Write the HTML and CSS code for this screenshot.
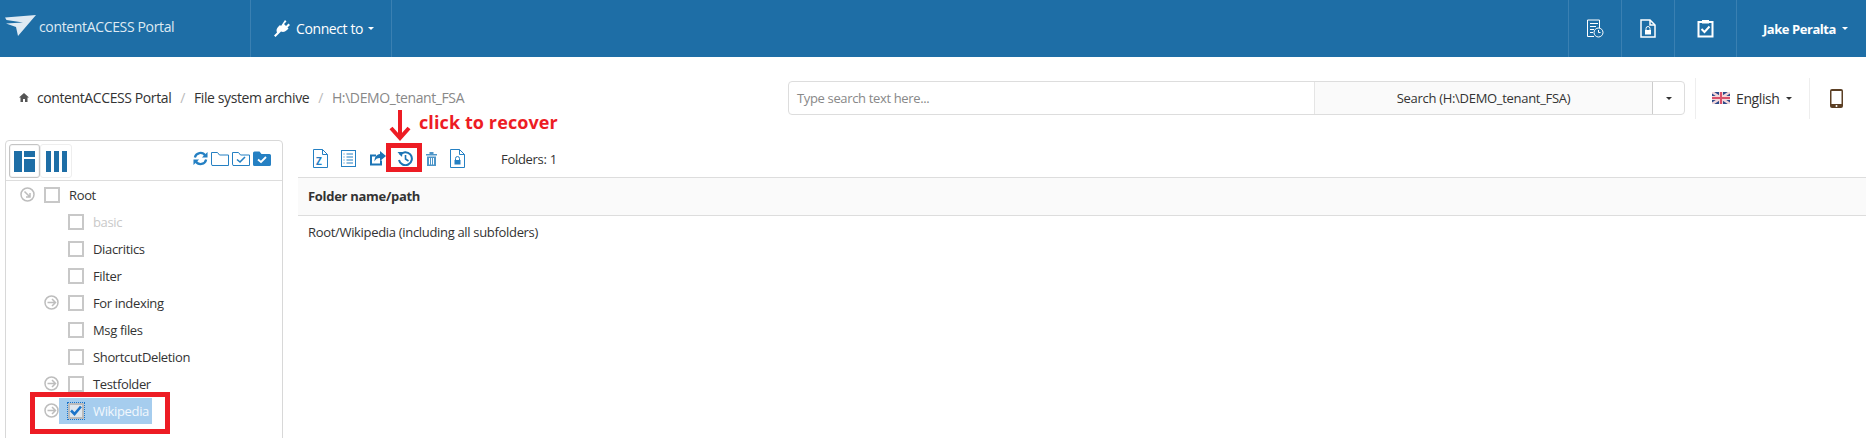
FILE: index.html
```html
<!DOCTYPE html>
<html lang="en">
<head>
<meta charset="utf-8">
<title>contentACCESS Portal</title>
<link rel="stylesheet" href="styles.css">
</head>
<body>
<header class="topbar">
  <div class="brand">
    <svg class="brand-logo" width="32" height="22" viewBox="0 0 32 22"><path d="M0 2.500L31 0 13 21 11 12 1 8.500 18 7.500 1.500 5Z" fill="#dfeaf3"/></svg>
    <span class="brand-text">contentACCESS Portal</span>
  </div>
  <div class="nav-item connect">
    <svg width="18" height="19" viewBox="0 0 18 19"><path d="M12 1l1.500 1.500L11 5l2 2 2.500-2.500L17 6l-2.500 2.500 1 1-1.500 1.500c-2 2-4 2.500-6 1.500L5 15.500l-2.500 2.500L1 16.500l3-3C3 11.500 3.500 9.500 5.500 7.500L7 6l1 1z" fill="#fff"/></svg>
    <span>Connect to</span><i class="caret"></i>
  </div>
  <div class="spacer"></div>
  <div class="nav-icon">
    <svg width="18" height="19" viewBox="0 0 18 19" fill="none" stroke="#fff"><path d="M8 17.500H1.500V1h12v8"/><path d="M4 4.500h8M4 7.500h6M4 10.500h4M4 13.500h3" stroke-dasharray="none"/><circle cx="12.500" cy="13.500" r="4.500"/><path d="M12.500 11v2.500h2"/></svg>
  </div>
  <div class="nav-icon">
    <svg width="16" height="19" viewBox="0 0 16 19" fill="none" stroke="#fff" stroke-width="1.500"><path d="M1 1h9l5 5v12H1z"/><path d="M10 1v5h5"/><rect x="5" y="11" width="6" height="4.500" fill="#fff" stroke="none"/><path d="M6 11V9.500a2 2 0 0 1 4 0V11" stroke-width="1"/></svg>
  </div>
  <div class="nav-icon">
    <svg width="17" height="19" viewBox="0 0 17 19" fill="none" stroke="#fff" stroke-width="2"><path d="M5 3H1.500v14.500h14V3H12"/><rect x="5" y="1" width="7" height="3.500" fill="#fff" stroke="none"/><path d="M4.500 10l3 3 5-5.500"/></svg>
  </div>
  <div class="user"><span>Jake Peralta</span><i class="caret"></i></div>
</header>

<section class="subbar">
  <nav class="crumbs">
    <svg width="10" height="9" viewBox="0 0 10 9"><path d="M5 0l5 4.500H8.500V9H6V6H4v3H1.500V4.500H0z" fill="#555"/></svg>
    <a class="crumb-first">contentACCESS Portal</a><b>/</b><a>File system archive</a><b>/</b><em>H:\DEMO_tenant_FSA</em>
  </nav>
  <div class="search">
    <div class="search-input">Type search text here...</div>
    <div class="search-btn">Search (H:\DEMO_tenant_FSA)</div>
    <div class="search-drop"><i class="caret dark"></i></div>
  </div>
  <div class="lang">
    <svg width="18" height="12" viewBox="0 0 18 12"><rect width="18" height="12" fill="#2d4a8a"/><path d="M0 0l18 12M18 0L0 12" stroke="#f3d6da" stroke-width="2.500"/><path d="M9 0v12M0 6h18" stroke="#f3d6da" stroke-width="4"/><path d="M9 0v12M0 6h18" stroke="#d9506a" stroke-width="2"/></svg>
    <span>English</span><i class="caret dark"></i>
  </div>
  <div class="device">
    <svg width="13" height="19" viewBox="0 0 13 19"><rect x="0" y="0" width="13" height="19" rx="2" fill="#5b3f24"/><rect x="1.500" y="2" width="10" height="13" fill="#fff"/><circle cx="6.500" cy="17" r="1" fill="#fff"/></svg>
  </div>
</section>

<main class="workspace">
  <aside class="tree-panel">
    <div class="tree-tools">
      <div class="view-btn active">
        <svg width="21" height="21" viewBox="0 0 21 21" fill="#1e6ea6"><rect width="8" height="21"/><rect x="10" width="11" height="6"/><rect x="10" y="8" width="11" height="13"/></svg>
      </div>
      <div class="view-btn">
        <svg width="21" height="21" viewBox="0 0 21 21" fill="#1e6ea6"><rect width="5" height="21"/><rect x="8" width="5" height="21"/><rect x="16" width="5" height="21"/></svg>
      </div>
      <div class="tree-actions">
        <svg width="15" height="15" viewBox="0 0 16 16" fill="none" stroke="#2580c3" stroke-width="2.400"><path d="M2 7a6 6 0 0 1 11-2M14 9a6 6 0 0 1-11 2"/><path d="M15.500 1v6h-6z M.5 15V9h6z" fill="#2580c3" stroke="none"/></svg>
        <svg width="18" height="15" viewBox="0 0 18 15" fill="none" stroke="#2580c3"><path d="M.5 13V1.500h6l2 2.500h9v10.500H1z"/></svg>
        <svg width="18" height="15" viewBox="0 0 18 15" fill="none" stroke="#2580c3"><path d="M.5 13V1.500h6l2 2.500h9v10.500H1z"/><path d="M5 8.500l3 2.500 5-5" stroke-width="1.600"/></svg>
        <svg width="18" height="15" viewBox="0 0 18 15"><path d="M0 2a1.500 1.500 0 0 1 1.500-1.500h5l2 2.500h8A1.500 1.500 0 0 1 18 4.500v9a1.500 1.500 0 0 1-1.500 1.500h-15A1.500 1.500 0 0 1 0 13.500z" fill="#2580c3"/><path d="M5 8.500l3 2.500 5-5" fill="none" stroke="#fff" stroke-width="1.800"/></svg>
      </div>
    </div>
    <ul class="tree">
      <li class="node root"><span class="exp"><svg width="15" height="15" viewBox="0 0 15 15" fill="none" stroke="#bdbdbd" stroke-width="1.500"><circle cx="7.500" cy="7.500" r="6.500"/><path d="M4.500 4.500l5.500 5.500M10 6v4H6"/></svg></span><span class="box"></span><span>Root</span></li>
      <li class="node"><span class="exp"></span><span class="box"></span><span class="muted">basic</span></li>
      <li class="node"><span class="exp"></span><span class="box"></span><span>Diacritics</span></li>
      <li class="node"><span class="exp"></span><span class="box"></span><span>Filter</span></li>
      <li class="node"><span class="exp"><svg width="15" height="15" viewBox="0 0 15 15" fill="none" stroke="#bdbdbd" stroke-width="1.500"><circle cx="7.500" cy="7.500" r="6.500"/><path d="M3.500 7.500h8M8 4l3.500 3.500L8 11"/></svg></span><span class="box"></span><span>For indexing</span></li>
      <li class="node"><span class="exp"></span><span class="box"></span><span>Msg files</span></li>
      <li class="node"><span class="exp"></span><span class="box"></span><span>ShortcutDeletion</span></li>
      <li class="node"><span class="exp"><svg width="15" height="15" viewBox="0 0 15 15" fill="none" stroke="#bdbdbd" stroke-width="1.500"><circle cx="7.500" cy="7.500" r="6.500"/><path d="M3.500 7.500h8M8 4l3.500 3.500L8 11"/></svg></span><span class="box"></span><span>Testfolder</span></li>
      <li class="node"><span class="exp"><svg width="15" height="15" viewBox="0 0 15 15" fill="none" stroke="#bdbdbd" stroke-width="1.500"><circle cx="7.500" cy="7.500" r="6.500"/><path d="M3.500 7.500h8M8 4l3.500 3.500L8 11"/></svg></span>
        <span class="selected"><span class="box checked"><svg width="12" height="11" viewBox="0 0 12 11" fill="none" stroke="#1b74c9" stroke-width="2.600"><path d="M1 5.500l3.500 3.500L11 1.500"/></svg></span><span>Wikipedia</span></span>
      </li>
    </ul>
  </aside>

  <section class="content">
    <div class="toolbar">
      <svg width="15" height="19" viewBox="0 0 15 19" fill="none" stroke="#2580c3"><path d="M.5.500h9l5 5v13H.5z"/><path d="M9.500.500v5h5"/><text x="3" y="16" class="z">Z</text></svg>
      <svg width="15" height="17" viewBox="0 0 15 17" fill="none" stroke="#2580c3"><rect x=".5" y=".5" width="14" height="16"/><path d="M5.500 4H12M5.500 7H12M5.500 10H12M5.500 13H12M2.500 4h1M2.500 7h1M2.500 10h1M2.500 13h1"/></svg>
      <svg width="17" height="15" viewBox="0 0 17 15"><path d="M1 3.500h6V5.500H3v7h8v-3h2v5H1z" fill="#1b74b5"/><path d="M11 0l6 5-6 5V7C8 7 6.500 8 5.500 10.500 5.500 6 7.500 3.500 11 3z" fill="#1b74b5"/></svg>
      <svg class="recover" width="16" height="15" viewBox="0 0 16 15" fill="none" stroke="#1b74b5" stroke-width="2"><path d="M3 4a6.500 6.500 0 1 1-1 5"/><path d="M.5 1l5 0-.5 5z" fill="#1b74b5" stroke="none"/><path d="M8.500 4v4l3 2" stroke-width="1.600"/></svg>
      <svg width="11" height="14" viewBox="0 0 11 14" fill="#4d95c8"><rect x="0" y="2" width="11" height="1.500"/><rect x="3.500" y="0" width="4" height="2"/><path d="M1 4.500h9V14H1zM3 6v6.500h1V6zM5 6v6.500h1V6zM7 6v6.500h1V6z" fill-rule="evenodd"/></svg>
      <svg width="15" height="19" viewBox="0 0 15 19" fill="none" stroke="#2580c3"><path d="M.5.500h9l5 5v13H.5z"/><path d="M9.500.500v5h5"/><rect x="4.500" y="11" width="6" height="4.500" fill="#2580c3" stroke="none"/><path d="M5.500 11V9.500a2 2 0 0 1 4 0V11"/></svg>
      <span class="count">Folders: 1</span>
    </div>
    <div class="table-head">Folder name/path</div>
    <div class="table-row">Root/Wikipedia (including all subfolders)</div>
  </section>
</main>

<div class="mark mark-recover"></div>
<div class="mark mark-tree"></div>
<svg class="arrow" width="22" height="31" viewBox="0 0 22 31"><path d="M11 0v28M2 18l9 10 9-10" fill="none" stroke="#ed1c24" stroke-width="4"/></svg>
<div class="note">click to recover</div>
</body>
</html>
```
FILE: styles.css
```css
* { box-sizing: border-box; }
html, body { margin: 0; height: 438px; overflow: hidden; background: #fff; }
body { font-family: "Open Sans", "Noto Sans", sans-serif; font-size: 13px; color: #333; position: relative; }

.topbar { display: flex; height: 57px; background: #1e6ea6; color: #fff; }
.brand { width: 251px; display: flex; align-items: center; gap: 2px; padding: 0 0 5px 5px; border-right: 1px solid #3a80b2; }
.brand-text { font-size: 14px; color: #dfeaf3; letter-spacing: -.35px; }
.nav-item { width: 141px; display: flex; align-items: center; padding-left: 22px; gap: 5px; border-right: 1px solid #3a80b2; font-size: 14px; letter-spacing: -.4px; }
.spacer { flex: 1; }
.nav-icon { width: 53px; display: flex; align-items: center; justify-content: center; border-left: 1px solid #3a80b2; }
.nav-icon:nth-child(6) { width: 62px; }
.user { width: 130px; display: flex; align-items: center; gap: 6px; padding-left: 26px; border-left: 1px solid #3a80b2; font-weight: 700; font-size: 13px; letter-spacing: -.45px; }
.caret { display: inline-block; width: 0; height: 0; border: 3.500px solid transparent; border-top-color: #fff; border-bottom: 0; }
.caret.dark { border-top-color: #333; }

.subbar { display: flex; align-items: center; height: 83px; padding: 0 0 1px 19px; }
.crumbs { display: flex; align-items: center; width: 769px; font-size: 14px; letter-spacing: -.4px; color: #333; padding-bottom: 2px; }
.crumbs svg { margin-right: 8px; }
.crumbs b { font-weight: 400; color: #bbb; margin: 0 9px; }
.crumbs em { font-style: normal; color: #888; }
.search { display: flex; height: 34px; width: 897px; border: 1px solid #ddd; border-radius: 4px; }
.search-input { width: 526px; padding-left: 8px; line-height: 32px; color: #888; letter-spacing: -.35px; font-size: 13px; border-right: 1px solid #e5e5e5; }
.search-btn { width: 338px; background: #fafafa; text-align: center; line-height: 32px; letter-spacing: -.3px; font-size: 13px; border-right: 1px solid #ccc; }
.search-drop { flex: 1; display: flex; align-items: center; justify-content: center; }
.lang { width: 115px; height: 41px; margin-left: 10px; display: flex; align-items: center; gap: 6px; padding-left: 16px; border-left: 1px solid #eee; border-right: 1px solid #eee; font-size: 14px; letter-spacing: -.4px; }
.device { flex: 1; display: flex; padding-left: 20px; align-items: center; }

.workspace { display: flex; height: 298px; padding-left: 5px; }
.tree-panel { width: 278px; height: 320px; flex: none; border: 1px solid #d8d8d8; border-radius: 4px; }
.tree-tools { display: flex; height: 40px; padding: 3px 0 0 3px; border-bottom: 1px solid #ddd; }
.view-btn { width: 32px; height: 34px; display: flex; align-items: center; justify-content: center; border: 1px solid #eee; border-radius: 3px; }
.view-btn.active { width: 31px; border-color: #c4c4c4; box-shadow: inset 0 0 0 1px #f5f5f5; }
.tree-actions { margin-left: auto; display: flex; gap: 3px; align-items: flex-start; padding: 7px 11px 0 0; }
.tree { list-style: none; margin: 0; padding: 0 0 0 14px; }
.node { display: flex; align-items: center; height: 27px; font-size: 13px; letter-spacing: -.35px; }
.root { margin-left: -24px; padding-left: 24px; }
.exp { width: 15px; height: 15px; margin: 0 9px 0 0; padding: 0; flex: none; display: block; margin-left: 24px; }
.root .exp { margin-left: 0; }
.box { width: 16px; height: 16px; flex: none; border: 2px solid #c8c8c8; background: #fff; margin-right: 9px; display: flex; align-items: center; justify-content: center; }
.muted { color: #c9c9c9; }
.selected { display: flex; align-items: center; height: 26px; background: #a6cdee; color: #f2f8fd; margin-left: -9px; padding: 0 3px 0 9px; }
.box.checked { outline: 1px dotted #1b74c9; background: #dfe7ee; border-color: #bbb; }

.content { flex: 1; padding-left: 15px; }
.toolbar { display: flex; align-items: center; height: 38px; padding-left: 15px; gap: 13px; margin-top: 0; border-bottom: 1px solid #ddd; }
.toolbar .recover { margin-left: -2px; }
.z { font: 700 10px "Open Sans", sans-serif; fill: #2580c3; stroke: none; }
.count { margin-left: 23px; letter-spacing: -.3px; }
.table-head { height: 38px; line-height: 36px; padding-left: 10px; background: #fafafa; border-bottom: 1px solid #ddd; font-weight: 700; letter-spacing: -.3px; }
.table-row { padding: 7px 0 0 10px; letter-spacing: -.32px; }

.mark { position: absolute; border: 5px solid #ed1c24; }
.mark-recover { left: 386px; top: 143px; width: 36px; height: 29px; }
.mark-tree { left: 30px; top: 392px; width: 140px; height: 42px; }
.arrow { position: absolute; left: 389px; top: 110px; }
.note { position: absolute; left: 419px; top: 109px; font-size: 18px; font-weight: 700; line-height: 27px; color: #ed1c24; letter-spacing: .1px; }
```
